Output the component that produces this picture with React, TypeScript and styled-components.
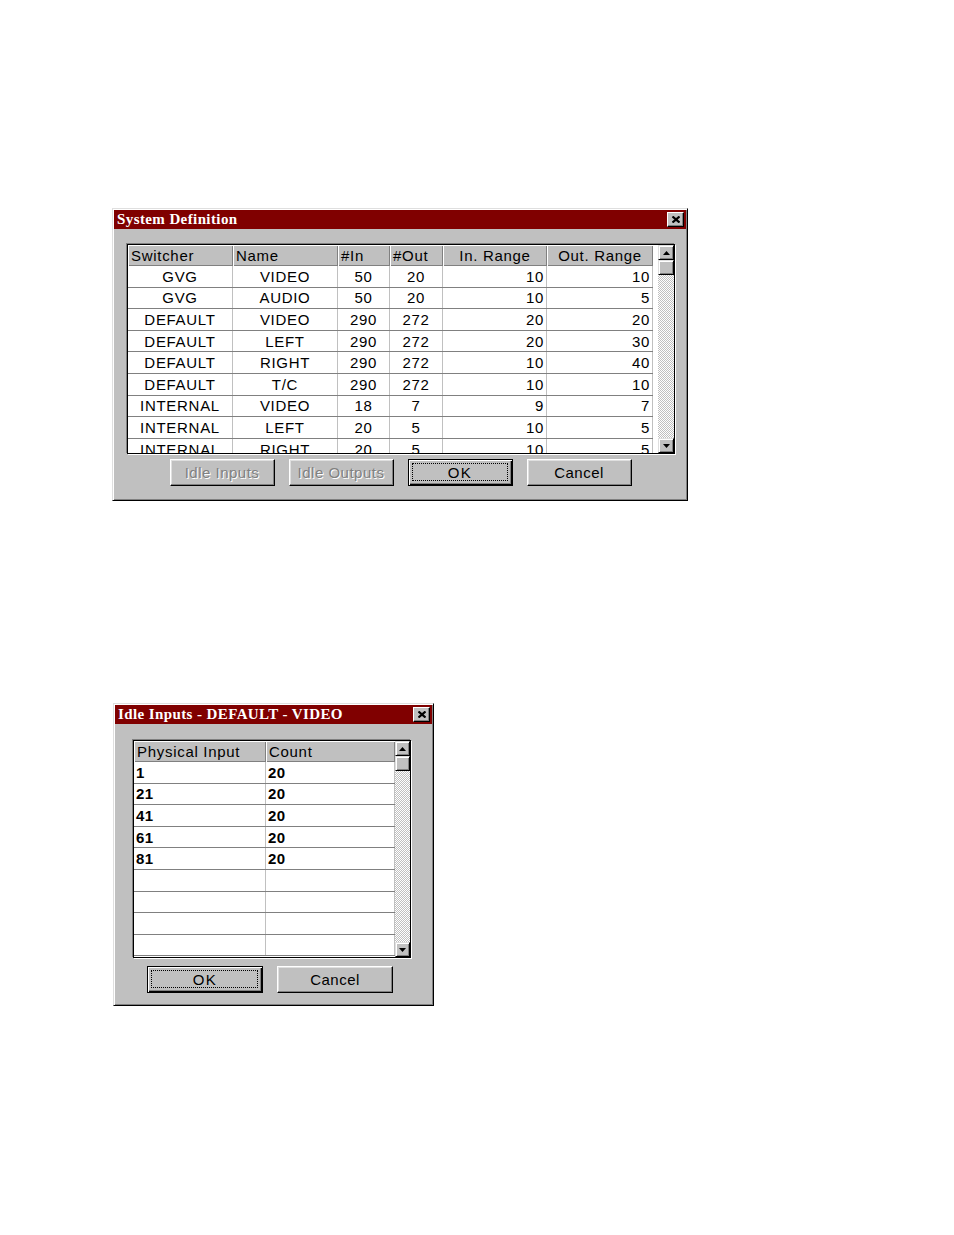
import styled, { createGlobalStyle } from "styled-components"

const GlobalStyle = createGlobalStyle`
  html, body {
    margin: 0;
    padding: 0;
    background: #ffffff;
  }
  body {
    font-family: "Liberation Sans", Arial, sans-serif;
    color: #000000;
  }
`

type Align = "left" | "center" | "right"

type Column = {
  label: string
  width: number
  headerAlign: Align
  cellAlign: Align
}

const systemColumns: Column[] = [
  { label: "Switcher", width: 105, headerAlign: "left", cellAlign: "center" },
  { label: "Name", width: 105, headerAlign: "left", cellAlign: "center" },
  { label: "#In", width: 52, headerAlign: "left", cellAlign: "center" },
  { label: "#Out", width: 53, headerAlign: "left", cellAlign: "center" },
  { label: "In. Range", width: 104, headerAlign: "center", cellAlign: "right" },
  { label: "Out. Range", width: 106, headerAlign: "center", cellAlign: "right" }
]

const systemRows: string[][] = [
  ["GVG", "VIDEO", "50", "20", "10", "10"],
  ["GVG", "AUDIO", "50", "20", "10", "5"],
  ["DEFAULT", "VIDEO", "290", "272", "20", "20"],
  ["DEFAULT", "LEFT", "290", "272", "20", "30"],
  ["DEFAULT", "RIGHT", "290", "272", "10", "40"],
  ["DEFAULT", "T/C", "290", "272", "10", "10"],
  ["INTERNAL", "VIDEO", "18", "7", "9", "7"],
  ["INTERNAL", "LEFT", "20", "5", "10", "5"],
  ["INTERNAL", "RIGHT", "20", "5", "10", "5"]
]

const idleColumns: Column[] = [
  { label: "Physical Input", width: 132, headerAlign: "left", cellAlign: "left" },
  { label: "Count", width: 129, headerAlign: "left", cellAlign: "left" }
]

const idleRows: string[][] = [
  ["1", "20"],
  ["21", "20"],
  ["41", "20"],
  ["61", "20"],
  ["81", "20"],
  ["", ""],
  ["", ""],
  ["", ""],
  ["", ""]
]

const justify = (a: Align) =>
  a === "left" ? "flex-start" : a === "right" ? "flex-end" : "center"

const CloseIcon = () => (
  <svg width="8" height="7" viewBox="0 0 8 7">
    <path d="M0.5 0.5 L7.5 6.5 M7.5 0.5 L0.5 6.5" stroke="#000" strokeWidth="2.2" />
  </svg>
)

const ArrowIcon = ({ down }: { down?: boolean }) => (
  <svg width="7" height="4" viewBox="0 0 7 4">
    <path d={down ? "M0 0 H7 L3.5 4 Z" : "M3.5 0 L7 4 H0 Z"} fill="#000" />
  </svg>
)

const DataGrid = ({
  columns,
  rows,
  width,
  height,
  gap,
  scrollWidth,
  heavy
}: {
  columns: Column[]
  rows: string[][]
  width: number
  height: number
  gap: number
  scrollWidth: number
  heavy?: boolean
}) => {
  return (
    <GridFrame $width={width} $height={height}>
      <TableArea $gap={gap}>
        <HeaderRow>
          {columns.map((c) => (
            <HeaderCell key={c.label} $width={c.width} $align={c.headerAlign}>
              {c.label}
            </HeaderCell>
          ))}
        </HeaderRow>
        {rows.map((r, i) => (
          <BodyRow key={i}>
            {r.map((v, j) => (
              <BodyCell
                key={j}
                $width={columns[j].width}
                $align={columns[j].cellAlign}
                $heavy={heavy}
              >
                {v}
              </BodyCell>
            ))}
          </BodyRow>
        ))}
      </TableArea>
      <ScrollBar $width={scrollWidth}>
        <ScrollButton>
          <ArrowIcon />
        </ScrollButton>
        <ScrollThumb />
        <ScrollTrack />
        <ScrollButton>
          <ArrowIcon down />
        </ScrollButton>
      </ScrollBar>
    </GridFrame>
  )
}

const Dialog = ({
  title,
  width,
  height,
  left,
  top,
  children
}: {
  title: string
  width: number
  height: number
  left: number
  top: number
  children: React.ReactNode
}) => (
  <Window $width={width} $height={height} $left={left} $top={top}>
    <TitleBar>
      <TitleText>{title}</TitleText>
      <CloseButton>
        <CloseIcon />
      </CloseButton>
    </TitleBar>
    {children}
  </Window>
)

export default function App() {
  return (
    <>
      <GlobalStyle />
      <Page>
        <Dialog title="System Definition" width={576} height={293} left={112} top={208}>
          <DialogBody $top={15} $left={13}>
            <DataGrid
              columns={systemColumns}
              rows={systemRows}
              width={548}
              height={210}
              gap={5}
              scrollWidth={16}
            />
            <ButtonRow $top={5} $left={0} $center>
              <Button $width={105} disabled>
                Idle Inputs
              </Button>
              <Button $width={105} disabled>
                Idle Outputs
              </Button>
              <Button $width={105} $default>
                OK
              </Button>
              <Button $width={105}>Cancel</Button>
            </ButtonRow>
          </DialogBody>
        </Dialog>
        <Dialog title="Idle Inputs - DEFAULT - VIDEO" width={321} height={303} left={113} top={202}>
          <DialogBody $top={16} $left={18}>
            <DataGrid
              columns={idleColumns}
              rows={idleRows}
              width={278}
              height={218}
              gap={0}
              scrollWidth={15}
              heavy
            />
            <ButtonRow $top={8} $left={14}>
              <Button $width={116} $default>
                OK
              </Button>
              <Button $width={116}>Cancel</Button>
            </ButtonRow>
          </DialogBody>
        </Dialog>
      </Page>
    </>
  )
}

const Page = styled.div`
  width: 954px;
  height: 1235px;
  display: flex;
  flex-direction: column;
  align-items: flex-start;
`

const Window = styled.div<{ $width: number; $height: number; $left: number; $top: number }>`
  box-sizing: border-box;
  width: ${(p) => p.$width}px;
  height: ${(p) => p.$height}px;
  margin: ${(p) => p.$top}px 0 0 ${(p) => p.$left}px;
  background: #c0c0c0;
  border: 1px solid;
  border-color: #dfdfdf #000000 #000000 #dfdfdf;
  box-shadow: inset 1px 1px #ffffff, inset -1px -1px #808080;
  padding: 1px;
  display: flex;
  flex-direction: column;
`

const TitleBar = styled.div`
  height: 19px;
  flex-shrink: 0;
  background: #800000;
  display: flex;
  align-items: center;
  justify-content: space-between;
  padding-left: 3px;
`

const TitleText = styled.span`
  font-family: "Liberation Serif", "Times New Roman", serif;
  font-weight: 700;
  font-size: 15px;
  letter-spacing: 0.4px;
  color: #ffffff;
  white-space: nowrap;
`

const CloseButton = styled.div`
  box-sizing: border-box;
  width: 17px;
  height: 15px;
  margin-right: 2px;
  background: #c0c0c0;
  border: 1px solid;
  border-color: #ffffff #000000 #000000 #ffffff;
  box-shadow: inset -1px -1px #808080;
  display: flex;
  align-items: center;
  justify-content: center;
`

const DialogBody = styled.div<{ $top: number; $left: number }>`
  display: flex;
  flex-direction: column;
  align-items: flex-start;
  padding: ${(p) => p.$top}px 0 0 ${(p) => p.$left}px;
`

const GridFrame = styled.div<{ $width: number; $height: number }>`
  box-sizing: border-box;
  width: ${(p) => p.$width}px;
  height: ${(p) => p.$height}px;
  border: 1px solid #000000;
  box-shadow: -1px -1px 0 #808080, 1px 1px 0 #ffffff;
  background: #ffffff;
  display: flex;
  overflow: hidden;
`

const TableArea = styled.div<{ $gap: number }>`
  flex: 1;
  overflow: hidden;
  padding-right: ${(p) => p.$gap}px;
  font-size: 15px;
  letter-spacing: 0.7px;
`

const HeaderRow = styled.div`
  display: flex;
  height: 21px;
`

const HeaderCell = styled.div<{ $width: number; $align: Align }>`
  box-sizing: border-box;
  width: ${(p) => p.$width}px;
  flex-shrink: 0;
  background: #c0c0c0;
  box-shadow: inset 1px 1px #ffffff, inset -1px -1px #808080;
  display: flex;
  align-items: center;
  justify-content: ${(p) => justify(p.$align)};
  padding: 0 3px;
  white-space: nowrap;
`

const BodyRow = styled.div`
  box-sizing: border-box;
  display: flex;
  height: 21.6px;
  border-bottom: 1px solid #808080;
`

const BodyCell = styled.div<{ $width: number; $align: Align; $heavy?: boolean }>`
  box-sizing: border-box;
  width: ${(p) => p.$width}px;
  flex-shrink: 0;
  border-right: 1px solid #c0c0c0;
  display: flex;
  align-items: center;
  justify-content: ${(p) => justify(p.$align)};
  padding: 0 2px;
  white-space: nowrap;
  overflow: hidden;
  font-weight: ${(p) => (p.$heavy ? 700 : 400)};
  letter-spacing: ${(p) => (p.$heavy ? "0.4px" : "0.7px")};
`

const ScrollBar = styled.div<{ $width: number }>`
  width: ${(p) => p.$width}px;
  flex-shrink: 0;
  display: flex;
  flex-direction: column;
`

const bevel = `
  box-sizing: border-box;
  background: #c0c0c0;
  border: 1px solid;
  border-color: #dfdfdf #000000 #000000 #dfdfdf;
  box-shadow: inset 1px 1px #ffffff, inset -1px -1px #808080;
`

const ScrollButton = styled.div`
  ${bevel}
  height: 15px;
  flex-shrink: 0;
  display: flex;
  align-items: center;
  justify-content: center;
`

const ScrollThumb = styled.div`
  ${bevel}
  height: 15px;
  flex-shrink: 0;
`

const ScrollTrack = styled.div`
  flex: 1;
  background-color: #ffffff;
  background-image: repeating-conic-gradient(#c0c0c0 0 25%, #ffffff 0 50%);
  background-size: 2px 2px;
`

const ButtonRow = styled.div<{ $top: number; $left: number; $center?: boolean }>`
  display: flex;
  gap: 14px;
  align-self: ${(p) => (p.$center ? "stretch" : "flex-start")};
  justify-content: ${(p) => (p.$center ? "center" : "flex-start")};
  padding: ${(p) => p.$top}px 0 0 ${(p) => p.$left}px;
  padding-right: ${(p) => (p.$center ? 12 : 0)}px;
`

const Button = styled.button<{ $width: number; $default?: boolean }>`
  position: relative;
  box-sizing: border-box;
  width: ${(p) => p.$width}px;
  height: 27px;
  padding: 0;
  background: #c0c0c0;
  font-family: "Liberation Sans", Arial, sans-serif;
  font-size: 15px;
  letter-spacing: ${(p) => (p.$default ? "1.5px" : "0.5px")};
  color: #000000;
  white-space: nowrap;
  border: 1px solid;
  border-color: ${(p) => (p.$default ? "#000000" : "#ffffff #000000 #000000 #ffffff")};
  box-shadow: ${(p) =>
    p.$default
      ? "inset 1px 1px #ffffff, inset -1px -1px #000000, inset -2px -2px #808080"
      : "inset -1px -1px #808080, inset 1px 1px #dfdfdf"};

  &:disabled {
    color: #808080;
    text-shadow: 1px 1px 0 #ffffff;
  }

  &::after {
    content: "";
    display: ${(p) => (p.$default ? "block" : "none")};
    position: absolute;
    inset: 3px 4px 4px 3px;
    border: 1px dotted #000000;
  }
`
